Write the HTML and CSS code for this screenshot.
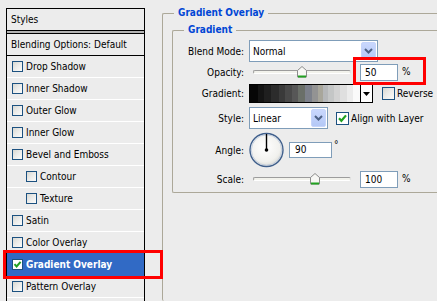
FILE: index.html
```html
<!DOCTYPE html>
<html>
<head>
<meta charset="utf-8">
<link rel="stylesheet" href="styles.css">
</head>
<body>
<div class="page">
  <div class="styles-panel">
    <div class="panel-head">Styles</div>
    <div class="panel-sep"></div>
    <ul class="style-list">
      <li class="item blend">Blending Options: Default</li>
      <li class="item"><span class="cb"></span>Drop Shadow</li>
      <li class="item"><span class="cb"></span>Inner Shadow</li>
      <li class="item"><span class="cb"></span>Outer Glow</li>
      <li class="item"><span class="cb"></span>Inner Glow</li>
      <li class="item"><span class="cb"></span>Bevel and Emboss</li>
      <li class="item sub"><span class="cb"></span>Contour</li>
      <li class="item sub"><span class="cb"></span>Texture</li>
      <li class="item"><span class="cb"></span>Satin</li>
      <li class="item"><span class="cb"></span>Color Overlay</li>
      <li class="item selected"><span class="cb checked"><svg width="9" height="9" viewBox="0 0 9 9"><path d="M1.5 4.2 L3.6 6.5 L7.6 1.8" fill="none" stroke="#21a121" stroke-width="2"/></svg></span>Gradient Overlay</li>
      <li class="item"><span class="cb"></span>Pattern Overlay</li>
    </ul>
  </div>

  <div class="settings">
    <fieldset class="group outer">
      <legend>Gradient Overlay</legend>
      <fieldset class="group inner">
        <legend>Gradient</legend>

        <div class="row r-blend">
          <span class="lbl">Blend Mode:</span>
          <div class="select sel-blend">
            <span class="sel-text">Normal</span>
            <span class="sel-btn"><svg width="9" height="6" viewBox="0 0 9 6"><path d="M1 1 L4.5 4.5 L8 1" fill="none" stroke="#4d6185" stroke-width="2"/></svg></span>
          </div>
        </div>

        <div class="row r-opacity">
          <span class="lbl">Opacity:</span>
          <div class="slider">
            <div class="track"></div>
            <svg class="thumb" style="left:44px" width="10" height="12" viewBox="0 0 10 12"><path d="M5 0.5 L9.5 4.5 L9.5 11 L0.5 11 L0.5 4.5 Z" fill="#f7f7f4" stroke="#8c8c8c"/><path d="M1 10.5 L9 10.5" stroke="#21a121" stroke-width="2"/></svg>
          </div>
          <span class="num">50</span>
          <span class="unit">%</span>
        </div>

        <div class="row r-gradient">
          <span class="lbl">Gradient:</span>
          <div class="swatch">
            <div class="ramp"></div>
            <div class="ramp-btn"><svg width="7" height="4" viewBox="0 0 7 4"><path d="M0 0 L7 0 L3.5 4 Z" fill="#000"/></svg></div>
          </div>
          <span class="cb big reverse-cb"></span>
          <span class="cb-text">Reverse</span>
        </div>

        <div class="row r-style">
          <span class="lbl">Style:</span>
          <div class="select sel-style">
            <span class="sel-text">Linear</span>
            <span class="sel-btn"><svg width="9" height="6" viewBox="0 0 9 6"><path d="M1 1 L4.5 4.5 L8 1" fill="none" stroke="#4d6185" stroke-width="2"/></svg></span>
          </div>
          <span class="cb big checked align-cb"><svg width="11" height="11" viewBox="0 0 11 11"><path d="M2 5.2 L4.4 7.8 L9 2.4" fill="none" stroke="#21a121" stroke-width="2.2"/></svg></span>
          <span class="cb-text">Align with Layer</span>
        </div>

        <div class="row r-angle">
          <span class="lbl">Angle:</span>
          <svg class="dial" width="35" height="36" viewBox="0 0 35 36">
            <defs>
              <radialGradient id="dialfill" cx="0.45" cy="0.4" r="0.6">
                <stop offset="0" stop-color="#ffffff"/>
                <stop offset="0.75" stop-color="#f1f1ee"/>
                <stop offset="1" stop-color="#dcdcd6"/>
              </radialGradient>
            </defs>
            <circle cx="17.5" cy="18" r="16.5" fill="url(#dialfill)" stroke="#3f5f8c" stroke-width="1.4"/>
            <circle cx="17.5" cy="18" r="15.2" fill="none" stroke="#b9c7dc" stroke-width="0.8"/>
            <line x1="17.5" y1="18" x2="17.5" y2="2" stroke="#000" stroke-width="1.4"/>
            <circle cx="17.5" cy="18" r="1.8" fill="#000"/>
          </svg>
          <span class="num num-angle">90</span>
          <span class="deg">°</span>
        </div>

        <div class="row r-scale">
          <span class="lbl">Scale:</span>
          <div class="slider">
            <div class="track"></div>
            <svg class="thumb" style="left:57px" width="10" height="12" viewBox="0 0 10 12"><path d="M5 0.5 L9.5 4.5 L9.5 11 L0.5 11 L0.5 4.5 Z" fill="#f7f7f4" stroke="#8c8c8c"/><path d="M1 10.5 L9 10.5" stroke="#21a121" stroke-width="2"/></svg>
          </div>
          <span class="num">100</span>
          <span class="unit">%</span>
        </div>
      </fieldset>
    </fieldset>
  </div>
</div>
<div class="callout callout-layer"></div>
<div class="callout callout-opacity"></div>
</body>
</html>
```
FILE: styles.css
```css
html, body {
  margin: 0;
  padding: 0;
  width: 437px;
  height: 301px;
  overflow: hidden;
  background: #ececec;
}
body {
  position: relative;
  font-family: "DejaVu Sans Condensed", "DejaVu Sans", "Liberation Sans", sans-serif;
  font-stretch: condensed;
  font-size: 10px;
  color: #000;
}
.page {
  display: flex;
  align-items: flex-start;
  height: 301px;
}

/* ---------- left styles list ---------- */
.styles-panel {
  margin: 8px 0 0 6px;
  width: 139px;
  height: 293px;
  box-sizing: border-box;
  border: 1px solid #000;
  border-bottom: none;
  flex: 0 0 auto;
}
.panel-head {
  height: 21px;
  line-height: 21px;
  padding-left: 4px;
  border-bottom: 1px solid #000;
}
.panel-sep {
  height: 2px;
  background: #b3b3b3;
}
.style-list {
  list-style: none;
  margin: 0;
  padding: 0;
  border-top: 1px solid #000;
}
.item {
  display: flex;
  align-items: center;
  height: 21px;
  padding-left: 5px;
  border-bottom: 1px solid #fff;
  white-space: nowrap;
}
.item.blend {
  padding-left: 4px;
  border-bottom-color: #000;
}
.item.sub {
  padding-left: 19px;
}
.item.selected {
  background: #316ac5;
  color: #fff;
  font-weight: bold;
  border-bottom-color: #316ac5;
  box-shadow: 0 -1px 0 #316ac5;
}
.cb {
  display: inline-flex;
  align-items: center;
  justify-content: center;
  box-sizing: border-box;
  width: 11px;
  height: 11px;
  border: 1px solid #1c5180;
  background: linear-gradient(135deg, #d8d8d2 0%, #ececea 50%, #fbfbfa 100%);
  margin-right: 3px;
  flex: 0 0 auto;
}
.cb.checked {
  background: #fff;
}
.cb.big {
  width: 13px;
  height: 13px;
  margin-right: 2px;
}

/* ---------- right settings ---------- */
.settings {
  margin-left: 17px;
  flex: 1 1 auto;
  min-width: 0;
}
.group {
  margin: 0;
  min-width: 0;
  border: 1px solid #aca899;
  border-right: none;
  border-radius: 2px 0 0 2px;
}
.group > legend {
  padding: 0 4px;
  font-weight: bold;
  color: #0046d5;
  line-height: 12px;
  font-size: 10px;
}
.outer {
  margin-top: 7px;
  height: 294px;
  box-sizing: border-box;
  padding: 0 0 0 9px;
  border-bottom: none;
}
.outer > legend {
  margin-left: 2px;
}
.inner {
  margin-top: 5px;
  padding: 4px 0 4px 0;
}
.inner > legend {
  margin-left: 11px;
}

.row {
  display: flex;
  align-items: center;
  white-space: nowrap;
}
.lbl {
  width: 71px;
  text-align: right;
  margin-right: 5px;
  flex: 0 0 auto;
}
.r-blend { height: 22px; }
.r-opacity { height: 20px; }
.r-gradient { height: 19px; margin-top: 2px; }
.r-style { height: 22px; margin-top: 4px; }
.r-angle { height: 36px; margin-top: 3px; }
.r-scale { height: 18px; margin-top: 2px; }

.select {
  display: flex;
  align-items: center;
  box-sizing: border-box;
  height: 22px;
  border: 1px solid #7f9db9;
  background: #fff;
  padding-left: 3px;
}
.sel-blend { width: 129px; }
.sel-style { width: 79px; }
.sel-text { flex: 1 1 auto; }
.sel-btn {
  display: flex;
  align-items: center;
  justify-content: center;
  box-sizing: border-box;
  width: 15px;
  height: 18px;
  margin-right: 1px;
  border: 1px solid #c5d4fa;
  border-radius: 2px;
  background: linear-gradient(#c9d7fd, #b4c8f6);
}

.slider {
  position: relative;
  width: 98px;
  height: 100%;
  margin-left: 4px;
  display: flex;
  align-items: center;
  flex: 0 0 auto;
}
.track {
  width: 100%;
  height: 4px;
  box-sizing: border-box;
  border-top: 1px solid #9c9c9c;
  border-left: 1px solid #9c9c9c;
  border-bottom: 1px solid #fff;
  border-right: 1px solid #e0e0e0;
  border-radius: 2px;
  background: #f2f2ec;
}
.thumb {
  position: absolute;
  top: 4px;
}
.r-scale .thumb { top: 3px; }

.num {
  box-sizing: border-box;
  width: 38px;
  height: 17px;
  line-height: 15px;
  border: 1px solid #7f9db9;
  background: #fff;
  padding-left: 4px;
  margin-left: 9px;
  flex: 0 0 auto;
}
.num-angle {
  width: 43px;
  height: 16px;
  line-height: 14px;
  padding-left: 5px;
  margin-left: 5px;
}
.unit {
  margin-left: 4px;
  margin-top: -2px;
}
.deg {
  align-self: flex-start;
  margin-top: 7px;
  margin-left: 2px;
}

.swatch {
  display: flex;
  box-sizing: border-box;
  width: 124px;
  height: 19px;
  border: 1px solid #000;
  flex: 0 0 auto;
}
.ramp {
  flex: 1 1 auto;
  background: linear-gradient(to right,
    #060606 0 7%, #141414 7% 13%, #1f1f1f 13% 19%, #2c2c2c 19% 26%,
    #3a3a3a 26% 32%, #494949 32% 38%, #575757 38% 44%, #6a6f68 44% 50%,
    #7c808a 50% 56%, #939393 56% 62%, #a8a69b 62% 66%, #b5b7b9 66% 71%,
    #c4c6c6 71% 76%, #d2d2d2 76% 82%, #dfdfdf 82% 88%, #ececec 88% 94%, #fafafa 94% 100%);
}
.ramp-btn {
  width: 11px;
  border-left: 1px solid #000;
  background: #fff;
  display: flex;
  align-items: center;
  justify-content: center;
}
.reverse-cb {
  width: 12px;
  height: 12px;
  margin-left: 9px;
}
.align-cb {
  margin-left: 8px;
}
.cb-text { margin-left: 0; }

.dial { flex: 0 0 auto; }

/* ---------- red annotation boxes ---------- */
.callout {
  position: absolute;
  border: 3px solid #ff0000;
  box-sizing: border-box;
}
.callout-layer {
  left: 3px;
  top: 250px;
  width: 160px;
  height: 29px;
}
.callout-opacity {
  left: 353px;
  top: 57px;
  width: 73px;
  height: 28px;
}
```
